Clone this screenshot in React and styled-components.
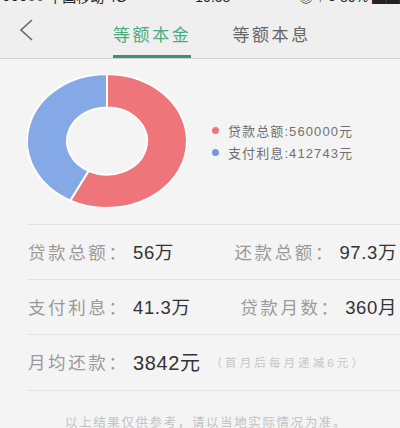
import React from 'react'
import styled, { createGlobalStyle } from 'styled-components'

const GlobalStyle = createGlobalStyle`
    html, body {
        margin: 0;
        padding: 0;
        background: #f4f4f4;
        overflow: hidden;
    }
    body {
        font-family: "Liberation Sans", "Noto Sans CJK SC", sans-serif;
    }
`;

const Page = styled.div`
    width: 400px;
    height: 428px;
    overflow: hidden;
    background: #f4f4f4;
`;

const StatusBar = styled.div`
    height: 6px;
    overflow: hidden;
    background: #efefef;
    color: #222;

    .inner {
        margin-top: -10px;
        height: 14px;
        display: flex;
        justify-content: space-between;
        align-items: flex-end;
        font-size: 14px;
        line-height: 14px;
        padding: 0 0 0 2px;
        white-space: nowrap;
    }
`;

const Header = styled.div`
    height: 52px;
    display: flex;
    background: #efefef;
    border-bottom: 1px solid #d3d3d3;
`;

const BackButton = styled.div`
    width: 113px;
    padding-left: 18px;
    box-sizing: border-box;
    display: flex;
    align-items: center;
    padding-bottom: 4px;
`;

const Tabs = styled.div`
    display: flex;
    gap: 41px;
`;

const Tab = styled.div`
    display: flex;
    align-items: center;
    box-sizing: border-box;
    padding-top: 5px;
    font-family: "Noto Sans CJK SC", sans-serif;
    font-size: 17px;
    letter-spacing: 2.6px;
    color: ${({ active }) => (active ? '#4aad80' : '#666')};
    border-bottom: 3px solid ${({ active }) => (active ? '#3a9468' : 'transparent')};
`;

const ChartSection = styled.div`
    display: flex;
    align-items: center;
    padding: 15px 0 16px 27px;
`;

const Legend = styled.div`
    margin-left: 25px;
    display: flex;
    flex-direction: column;
    gap: 3px;
`;

const LegendItem = styled.div`
    display: flex;
    align-items: center;
    font-size: 13px;
    letter-spacing: 1.1px;
    color: #707070;

    &::before {
        content: '';
        width: 7px;
        height: 7px;
        border-radius: 50%;
        margin-right: 9px;
        background: ${({ color }) => color};
    }
`;

const Divider = styled.div`
    height: 1px;
    margin-left: 27px;
    background: #e3e3e3;
`;

const Row = styled.div`
    height: ${({ tall }) => (tall ? 55 : 54)}px;
    display: flex;
    align-items: center;
    justify-content: ${({ single }) => (single ? 'flex-start' : 'space-between')};
    padding: 0 3px 2px 28px;
    box-sizing: border-box;
`;

const Item = styled.div`
    display: flex;
    align-items: center;
    white-space: nowrap;
`;

const Label = styled.span`
    font-family: "Noto Sans CJK SC", sans-serif;
    font-size: 17.5px;
    letter-spacing: 2.6px;
    color: #9a9a9a;
    width: 105px;
`;

const Value = styled.span`
    font-size: ${({ big }) => (big ? 20 : 18.5)}px;
    letter-spacing: 0.6px;
    color: #333;
`;

const Note = styled.span`
    margin-left: 10px;
    font-size: 11.5px;
    letter-spacing: 3.1px;
    color: #c6c6c6;
`;

const Footer = styled.div`
    padding: 21px 0 0 12px;
    text-align: center;
    font-size: 12.5px;
    letter-spacing: 1.6px;
    color: #c2c2c2;
`;

function Donut() {
    return (
        <svg width="160" height="134" viewBox="0 0 160 160" preserveAspectRatio="none">
            <path
                d="M80 0 A80 80 0 1 1 43.3 151.1 L61.65 115.54 A40 40 0 1 0 80 40 Z"
                fill="#ee7579"
                stroke="#fff"
                strokeWidth="2"
                vectorEffect="non-scaling-stroke"
            />
            <path
                d="M43.3 151.1 A80 80 0 0 1 80 0 L80 40 A40 40 0 0 0 61.65 115.54 Z"
                fill="#85a9e6"
                stroke="#fff"
                strokeWidth="2"
                vectorEffect="non-scaling-stroke"
            />
        </svg>
    )
}

function App() {
    return (
        <Page>
            <GlobalStyle />
            <StatusBar>
                <div className='inner'>
                    <span>●●●○○ 中国移动 4G</span>
                    <span>10:58</span>
                    <span>◎ ↑ ● 80% ▆▆</span>
                </div>
            </StatusBar>
            <Header>
                <BackButton>
                    <svg width="16" height="22" viewBox="0 0 16 22">
                        <path d="M14 1 L3 11 L14 21" fill="none" stroke="#666" strokeWidth="1.6" />
                    </svg>
                </BackButton>
                <Tabs>
                    <Tab active>等额本金</Tab>
                    <Tab>等额本息</Tab>
                </Tabs>
            </Header>
            <ChartSection>
                <Donut />
                <Legend>
                    <LegendItem color="#ee7579">贷款总额:560000元</LegendItem>
                    <LegendItem color="#6d9be0">支付利息:412743元</LegendItem>
                </Legend>
            </ChartSection>
            <Divider />
            <Row>
                <Item>
                    <Label>贷款总额：</Label>
                    <Value>56万</Value>
                </Item>
                <Item>
                    <Label>还款总额：</Label>
                    <Value>97.3万</Value>
                </Item>
            </Row>
            <Divider />
            <Row>
                <Item>
                    <Label>支付利息：</Label>
                    <Value>41.3万</Value>
                </Item>
                <Item>
                    <Label>贷款月数：</Label>
                    <Value>360月</Value>
                </Item>
            </Row>
            <Divider />
            <Row single tall>
                <Item>
                    <Label>月均还款：</Label>
                    <Value big>3842元</Value>
                    <Note>（首月后每月递减6元）</Note>
                </Item>
            </Row>
            <Divider />
            <Footer>以上结果仅供参考，请以当地实际情况为准。</Footer>
        </Page>
    )
}

export default App
